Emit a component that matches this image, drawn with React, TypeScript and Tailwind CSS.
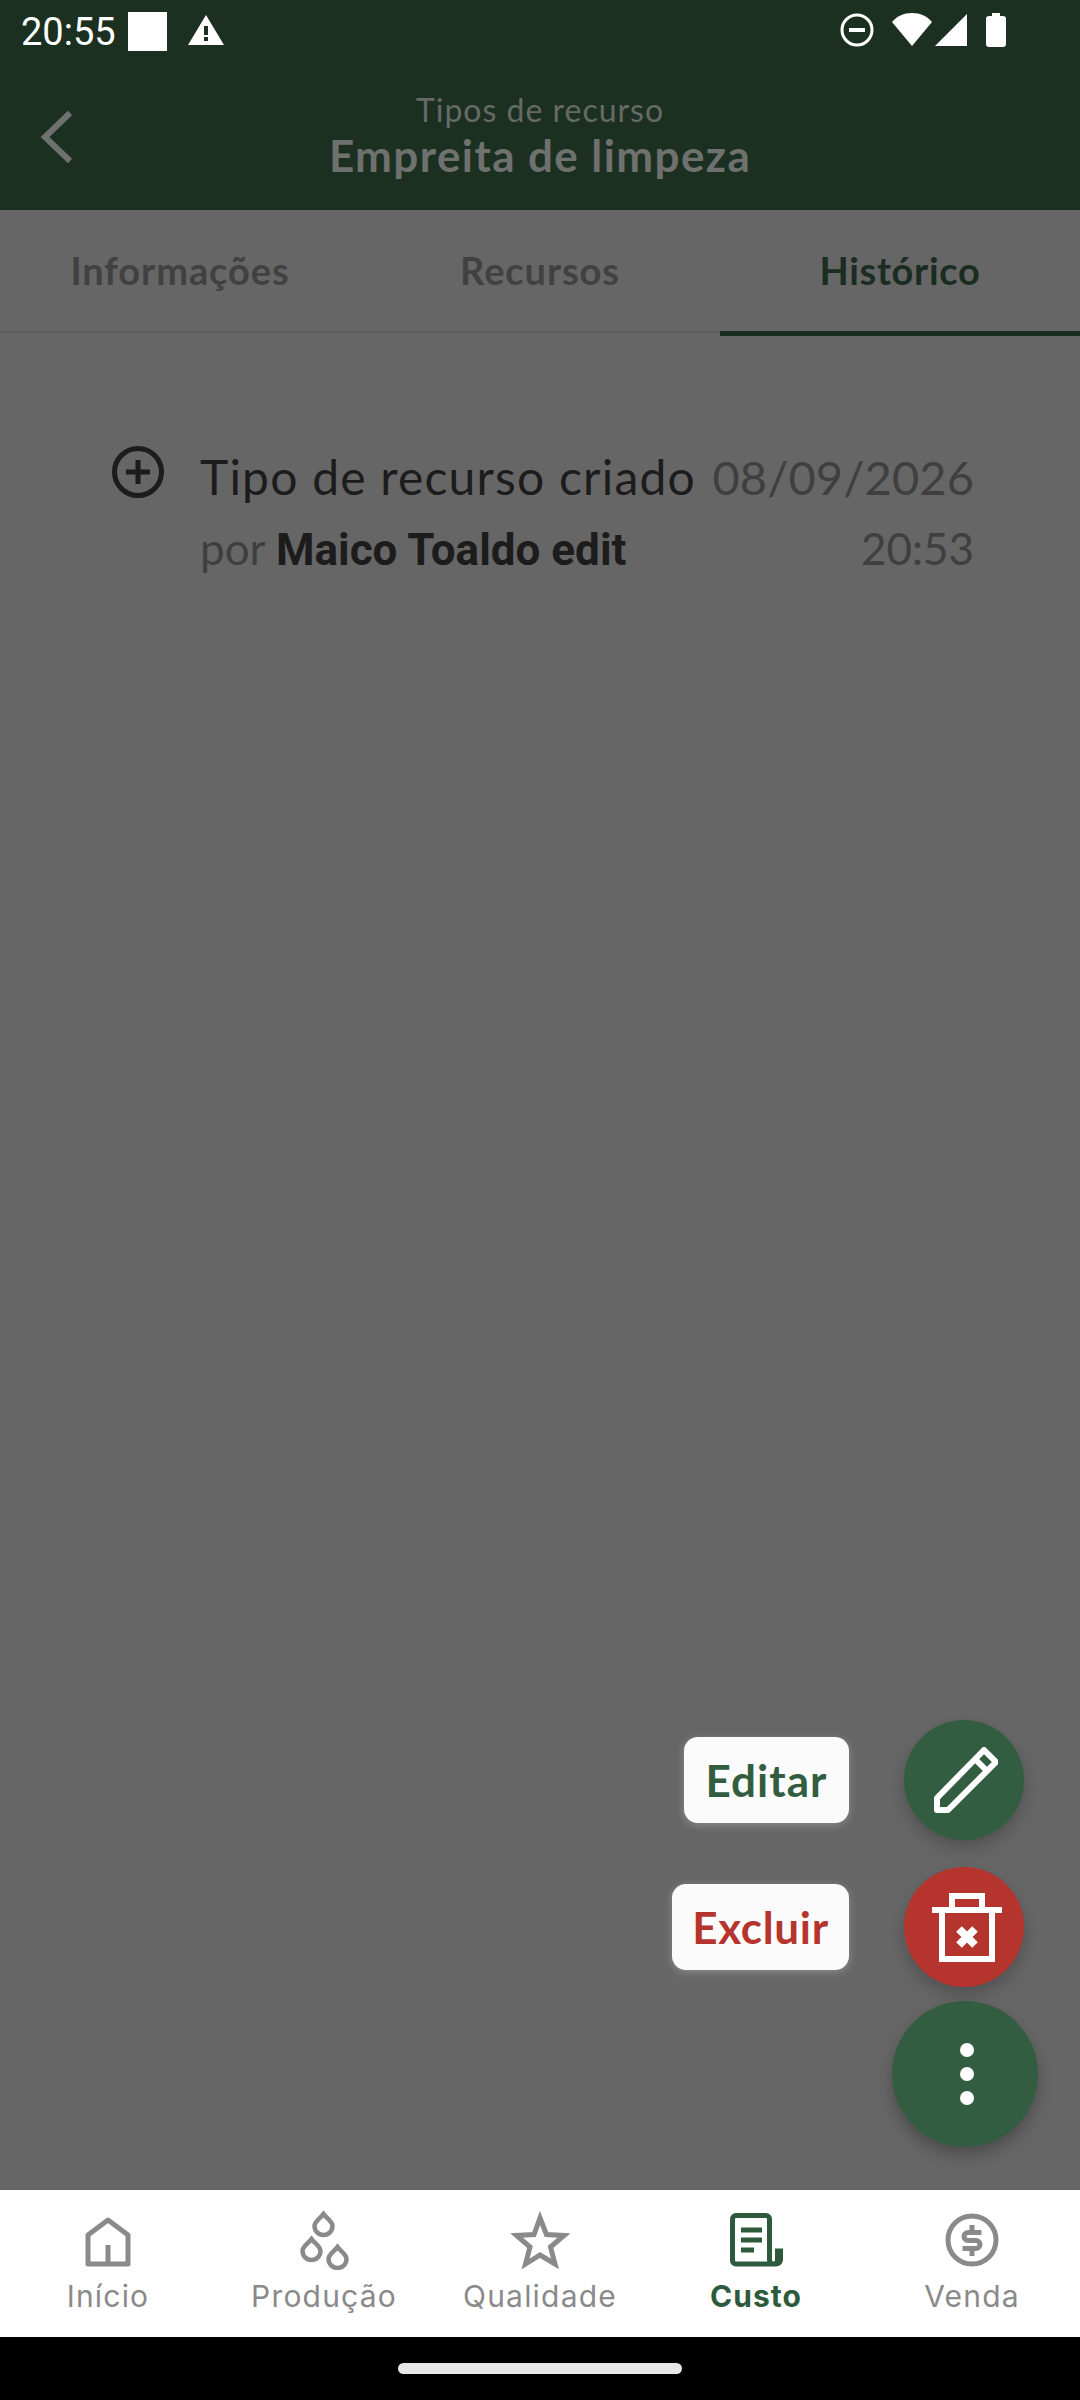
const SANS = "font-['Lato','Noto_Sans',sans-serif]";

function StatusBar() {
  return (
    <div className="flex h-[60px] items-center pl-[21px] pr-[74px]">
      <span className="pt-[3px] font-['Roboto',sans-serif] text-[38px] leading-none text-white">20:55</span>
      <div className="ml-[12px] mt-[3px] h-[39px] w-[39px] bg-white" />
      <svg className="ml-[21px]" width="36" height="32" viewBox="0 0 36 32">
        <path fillRule="evenodd" fill="#fff" d="M18 1 36 31H0ZM16 12v9h4v-9ZM16 23v4h4v-4Z" />
      </svg>
      <div className="flex-1" />
      <svg width="34" height="34" viewBox="0 0 34 34" fill="none" stroke="#fff">
        <circle cx="17" cy="17" r="15" strokeWidth="3" />
        <path d="M9 17h16" strokeWidth="4" />
      </svg>
      <svg className="ml-[18px]" width="40" height="34" viewBox="0 0 40 34">
        <path fill="#fff" d="M20 33 0 9C5 3 12 0 20 0s15 3 20 9Z" />
      </svg>
      <svg className="ml-[3px]" width="32" height="34" viewBox="0 0 32 34">
        <path fill="#fff" d="M32 1v32H0Z" />
      </svg>
      <svg className="ml-[19px]" width="20" height="34" viewBox="0 0 20 34">
        <path fill="#fff" d="M6 0h8v3h3a3 3 0 0 1 3 3v25a3 3 0 0 1-3 3H3a3 3 0 0 1-3-3V6a3 3 0 0 1 3-3h3Z" />
      </svg>
    </div>
  );
}

function Header() {
  return (
    <div className="bg-[#1c3022]">
      <StatusBar />
      <div className={`relative flex h-[150px] flex-col items-center pt-[32px] ${SANS}`}>
        <svg className="absolute left-[40px] top-[50px]" width="34" height="54" viewBox="0 0 34 54" fill="none" stroke="#6f716f" strokeWidth="6">
          <path d="M30 3 5 27l25 24" />
        </svg>
        <span className="text-[32px] leading-[36px] tracking-[1px] text-[#666a66]">Tipos de recurso</span>
        <span className="text-[44px] font-bold leading-[54px] tracking-[1.4px] text-[#6f716f]">Empreita de limpeza</span>
      </div>
    </div>
  );
}

function Tabs() {
  const tabs = ['Informações', 'Recursos', 'Histórico'];
  return (
    <div className={`flex h-[126px] items-start ${SANS}`}>
      {tabs.map((tab, i) => (
        <div
          key={tab}
          className={
            i === 2
              ? 'flex h-[126px] w-[360px] items-center justify-center border-b-[5px] border-[#1b2c20] text-[38px] font-bold tracking-[0.7px] text-[#1b2c20]'
              : 'flex h-[123px] w-[360px] items-center justify-center border-b-2 border-[#5c5c5c] text-[38px] font-bold tracking-[0.9px] text-[#414141]'
          }
        >
          {tab}
        </div>
      ))}
    </div>
  );
}

function HistoryRow() {
  return (
    <div className="flex pl-[112px] pr-[106px] pt-[110px]">
      <svg width="52" height="52" viewBox="0 0 52 52" fill="none" stroke="#1c1c1c" strokeWidth="5">
        <circle cx="26" cy="26" r="23.5" />
        <path d="M26 14v24M14 26h24" />
      </svg>
      <div className={`-mt-[5px] ml-[36px] flex-1 ${SANS}`}>
        <div className="flex justify-between leading-[72px]">
          <span className="text-[48px] tracking-[1.2px] text-[#1c1c1c]">Tipo de recurso criado</span>
          <span className="text-[47px] tracking-[0.1px] text-[#3f3f3f]">08/09/2026</span>
        </div>
        <div className="flex justify-between text-[44px] leading-[70px] text-[#3f3f3f]">
          <span>
            por <span className="font-['Roboto',sans-serif] font-bold text-[#1c1c1c]">Maico Toaldo edit</span>
          </span>
          <span>20:53</span>
        </div>
      </div>
    </div>
  );
}

function PencilIcon() {
  return (
    <svg width="64" height="66" viewBox="0 0 64 66" fill="none" stroke="#fff" strokeWidth="6" strokeLinejoin="round">
      <path d="M3 63V51L50 3l12 12-48 48Z" />
      <path d="M41 12l12 12" />
    </svg>
  );
}

function TrashIcon() {
  return (
    <svg width="70" height="70" viewBox="0 0 70 70" fill="none" stroke="#fff" strokeWidth="6">
      <path d="M0 17h70M10 17v49h50V17M20 17V3h30v14" />
      <path d="M27 36l16 16M43 36 27 52" strokeWidth="8" />
    </svg>
  );
}

function FabMenu() {
  return (
    <div className={`absolute bottom-[43px] right-[42px] flex flex-col items-end ${SANS}`}>
      <div className="mr-[14px] flex items-center gap-[55px]">
        <div className="flex h-[86px] w-[165px] items-center justify-center rounded-[14px] bg-[#fbfbfb] text-[44px] font-bold tracking-[1px] text-[#335d40] shadow-[0_2px_8px_rgba(255,255,255,0.25)]">
          Editar
        </div>
        <div className="flex h-[120px] w-[120px] items-center justify-center rounded-full bg-[#335d40] pl-[4px] shadow-[0_8px_16px_rgba(0,0,0,0.2)]">
          <PencilIcon />
        </div>
      </div>
      <div className="mr-[14px] mt-[27px] flex items-center gap-[55px]">
        <div className="flex h-[86px] w-[177px] items-center justify-center rounded-[14px] bg-[#fbfbfb] text-[44px] font-bold tracking-[0.7px] text-[#b5342e] shadow-[0_2px_8px_rgba(255,255,255,0.25)]">
          Excluir
        </div>
        <div className="flex h-[120px] w-[120px] items-center justify-center rounded-full bg-[#b5342e] pl-[5px] pt-[2px] shadow-[0_8px_16px_rgba(0,0,0,0.2)]">
          <TrashIcon />
        </div>
      </div>
      <div className="mt-[14px] flex h-[146px] w-[146px] flex-col items-center justify-center gap-[10px] rounded-full bg-[#335d40] pl-[3px] shadow-[0_8px_16px_rgba(0,0,0,0.25)]">
        <div className="h-[14px] w-[14px] rounded-full bg-white" />
        <div className="h-[14px] w-[14px] rounded-full bg-white" />
        <div className="h-[14px] w-[14px] rounded-full bg-white" />
      </div>
    </div>
  );
}

const GRAY = '#8a8a8a';
const DROP = 'M11.500 3C8 7.500 2.500 10.500 2.500 15a9 9 0 0 0 18 0C20.500 10.500 15 7.500 11.500 3Z';

function HomeIcon() {
  return (
    <svg width="46" height="50" viewBox="0 0 46 50" fill="none" stroke={GRAY} strokeWidth="5" strokeLinejoin="round">
      <path d="M3 47V18L23 3l20 15v29Z" />
      <path d="M23 28v19" />
    </svg>
  );
}

function DropsIcon() {
  return (
    <svg className="mb-[-3px]" width="50" height="60" viewBox="0 0 50 60" fill="none" stroke={GRAY} strokeWidth="4.500">
      <path transform="translate(13 1)" d={DROP} />
      <path transform="translate(1 26)" d={DROP} />
      <path transform="translate(27 34)" d={DROP} />
    </svg>
  );
}

function StarIcon() {
  return (
    <svg className="mb-[-2px]" width="60" height="58" viewBox="0 0 60 58" fill="none" stroke={GRAY} strokeWidth="5">
      <path d="M30 7l6.500 16.500 17.500 1-13.500 11.500 4.500 17L30 44 15.500 53l4.500-17L6.500 24.500l17.500-1Z" />
    </svg>
  );
}

function BillIcon() {
  return (
    <svg width="53" height="54" viewBox="0 0 53 54" fill="none" stroke="#2e5a3c" strokeWidth="5">
      <path d="M42 51H6a3.500 3.500 0 0 1-3.500-3.500V6A3.500 3.500 0 0 1 6 2.500h30A3.500 3.500 0 0 1 39.500 6v41a4 4 0 0 0 8 0v-9h3v9a4.500 4.500 0 0 1-4.500 4Z" />
      <path d="M11 17h21M11 27h21M11 37h13" />
    </svg>
  );
}

function DollarIcon() {
  return (
    <svg width="54" height="54" viewBox="0 0 54 54" fill="none" stroke={GRAY}>
      <circle cx="27" cy="27" r="24" strokeWidth="5" />
      <path d="M36.500 19.500H23a4 4 0 0 0 0 8h8a4 4 0 0 1 0 8H17.500" strokeWidth="5" />
      <path d="M27 12v7M27 35v8" strokeWidth="5" />
    </svg>
  );
}

function BottomNav() {
  const items = [
    { label: 'Início', icon: <HomeIcon /> },
    { label: 'Produção', icon: <DropsIcon /> },
    { label: 'Qualidade', icon: <StarIcon /> },
    { label: 'Custo', icon: <BillIcon />, active: true },
    { label: 'Venda', icon: <DollarIcon /> },
  ];
  return (
    <div className="flex h-[147px] bg-white font-['Inter',sans-serif]">
      {items.map((item) => (
        <div key={item.label} className="flex w-[216px] flex-col items-center">
          <div className="flex h-[78px] items-end pb-[1px]">{item.icon}</div>
          <span
            className={
              item.active
                ? 'mt-[6px] text-[30px] font-bold leading-[44px] tracking-[1px] text-[#2e5a3c]'
                : 'mt-[6px] text-[30px] leading-[44px] tracking-[1.2px] text-[#8a8a8a]'
            }
          >
            {item.label}
          </span>
        </div>
      ))}
    </div>
  );
}

export default function App() {
  return (
    <div className="flex h-[2400px] w-[1080px] flex-col overflow-hidden bg-[#666666]">
      <Header />
      <Tabs />
      <div className="relative flex-1">
        <HistoryRow />
        <FabMenu />
      </div>
      <BottomNav />
      <div className="flex h-[63px] justify-center bg-black pt-[26px]">
        <div className="h-[11px] w-[284px] rounded-full bg-[#e8e8e8]" />
      </div>
    </div>
  );
}
